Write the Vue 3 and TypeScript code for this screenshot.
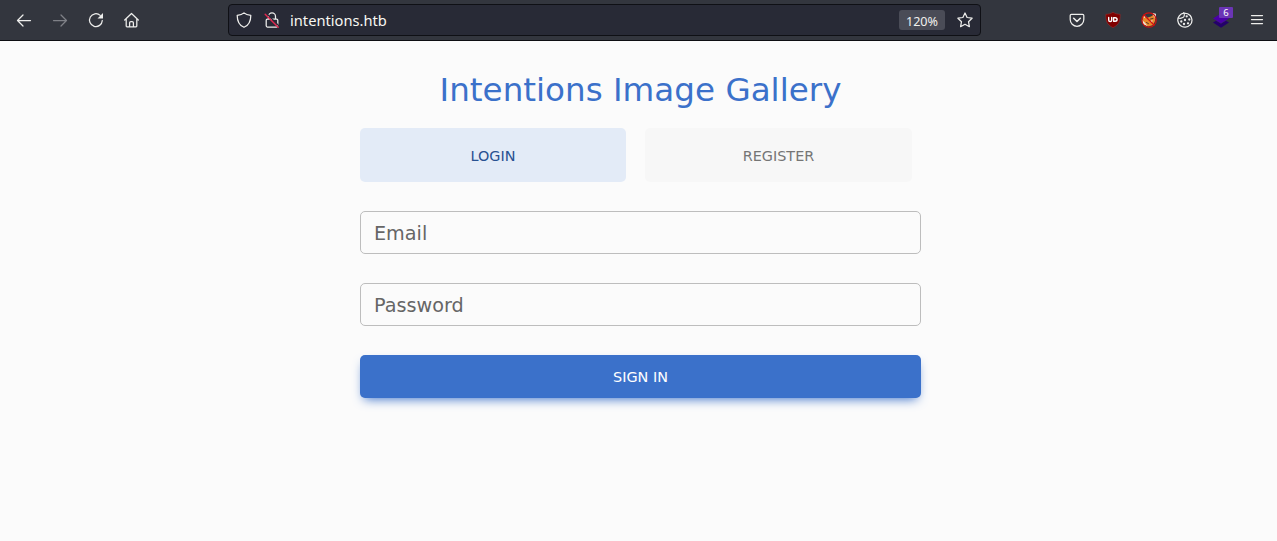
<script setup lang="ts">
import { ref } from 'vue';

type Tab = 'login' | 'register';

const tabs: { id: Tab; label: string }[] = [
  { id: 'login', label: 'Login' },
  { id: 'register', label: 'Register' },
];

const activeTab = ref<Tab>('login');
const email = ref('');
const password = ref('');
</script>

<template>
  <div class="browser">
    <header class="toolbar">
      <nav class="nav-buttons">
        <!-- Back -->
        <svg class="icon" viewBox="0 0 16 16">
          <path d="M14.500 8.500H1.500M7 3L1.500 8.500 7 14" />
        </svg>
        <!-- Forward -->
        <svg class="icon disabled" viewBox="0 0 16 16">
          <path d="M1.500 8.500h13M9 3l5.500 5.500L9 14" />
        </svg>
        <!-- Reload -->
        <svg class="icon" viewBox="0 0 16 16">
          <path d="M14.300 8.500A6.400 6.400 0 1 1 12.200 3.400" />
          <path class="solid" d="M15 1v5.500H9.500z" />
        </svg>
        <!-- Home -->
        <svg class="icon" viewBox="0 0 16 16">
          <path d="M.7 8l6.800-6.500L14.300 8M2.200 7v7q0 .8.800.800h9q.8 0 .8-.8V7M5.600 14.800v-4q0-1.300 1.300-1.300h1.200q1.300 0 1.300 1.300v4" />
        </svg>
      </nav>

      <div class="url-bar">
        <svg class="icon" viewBox="0 0 16 16">
          <path d="M8 .9C6.400 2.400 4 3.100 1.200 3.400 1.200 9 3.100 13.200 8 15.300c4.900-2.100 6.800-6.300 6.800-11.900C12 3.100 9.600 2.400 8 .9z" />
        </svg>
        <svg class="icon lock" viewBox="0 0 16 16">
          <path d="M4.500 7V4.400a3.500 3.500 0 0 1 7 0V7M3.400 7h9.200q1.200 0 1.200 1.200v5.600q0 1.200-1.200 1.200H3.400q-1.200 0-1.200-1.200V8.200Q2.200 7 3.400 7z" />
          <path class="slash-gap" d="M2.500 1.500l13 13" />
          <path class="slash" d="M1.200 2.200l13 13" />
        </svg>
        <span class="url">intentions.htb</span>
        <span class="zoom">120%</span>
        <svg class="icon star" viewBox="0 0 16 16">
          <path d="M8 1l2.100 4.500 5 .7-3.600 3.500.9 5L8 12.300l-4.400 2.400.9-5L.9 6.200l5-.7z" />
        </svg>
      </div>

      <div class="extensions">
        <!-- Pocket -->
        <svg class="icon" viewBox="0 0 16 16">
          <path d="M2.400 2.300h11.200q1.200 0 1.200 1.200v4a6.800 6.800 0 0 1-13.600 0v-4q0-1.200 1.200-1.200z" />
          <path class="bold" d="M4.700 6.300L8 9.500l3.300-3.200" />
        </svg>
        <!-- Ad blocker -->
        <svg class="icon" viewBox="0 0 16 16">
          <path class="shield" d="M8 .3c2 1.300 4.300 1.900 7.200 2 0 6.900-.8 10-7.200 13.400C1.600 12.300.8 9.200.8 2.300c2.900-.1 5.200-.7 7.200-2z" />
          <path class="shield-mark" d="M3.700 5.500v2.400q0 1.600 1.500 1.600t1.500-1.600V5.500" />
          <path class="shield-mark" d="M8.600 5.700H10q2.100 0 2.100 1.800T10 9.300H8.600z" />
        </svg>
        <!-- Proxy switcher -->
        <svg class="icon" viewBox="0 0 16 16">
          <path class="fox" d="M2 3.500l3 2.500 5-1.500L13.500 2l.7 6.500-2 4.500-5 1.500-4.500-2.200L1.500 9z" />
          <path class="fox-light" d="M1 8l3 2.700 2.500 3.300-4-1.500zM11.500 1l3.500.7-.2 5.300-2-2.500zM8.500 9.500l3-1.500-.5 3zM3 2.500L5.500 5 3 6z" />
          <path class="fox-dark" d="M5.500 10.500l2 1.200M9.500 7l2.500-.5" />
          <circle class="ban" cx="8" cy="8" r="7.200" />
          <path class="ban" d="M3 3l10 10" />
        </svg>
        <!-- Cookie editor -->
        <svg class="icon" viewBox="0 0 16 16">
          <path d="M6.800 1.100A7.100 7.100 0 1 0 15 8q-.2-2.500-1.800-4.500Q11 1 6.800 1.100z" />
          <path class="bite" d="M6.600.8q1 .4.700 2 .3 2-2.100 3-2 1-3.800.2" />
          <g class="crumbs">
            <circle cx="9.700" cy="4.300" r="1.150" />
            <circle cx="12.300" cy="7.500" r="1.150" />
            <circle cx="8" cy="8" r="1.150" />
            <circle cx="4.300" cy="9.500" r="1.150" />
            <circle cx="7" cy="12" r="1.150" />
            <circle cx="11" cy="11.300" r="1.150" />
          </g>
        </svg>
        <!-- Layers -->
        <div class="layers">
          <svg class="icon" viewBox="0 0 16 16">
            <path class="layer-bottom" d="M0 10.500l3-1.800 5 3 5-3 3 1.800-8 5.200z" />
            <path class="layer-top" d="M0 6.500l8-5 8 5-8 5z" />
          </svg>
          <span class="badge">6</span>
        </div>
        <!-- Menu -->
        <svg class="icon" viewBox="0 0 16 16">
          <path d="M2.500 3.500h11M2.500 7.500h11M2.500 11.500h11" />
        </svg>
      </div>
    </header>

    <main class="page">
      <h1>Intentions Image Gallery</h1>
      <div class="tabs">
        <button
          v-for="tab in tabs"
          :key="tab.id"
          type="button"
          class="tab"
          :class="{ active: activeTab === tab.id }"
          @click="activeTab = tab.id"
        >
          {{ tab.label }}
        </button>
      </div>
      <form @submit.prevent>
        <input v-model="email" class="field" type="email" placeholder="Email" />
        <input v-model="password" class="field" type="password" placeholder="Password" />
        <button class="submit" type="submit">Sign in</button>
      </form>
    </main>
  </div>
</template>

<style>
body {
  background: #fbfbfb;
}
</style>

<style scoped>
.browser {
  height: 100vh;
  overflow: hidden;
  font-family: 'DejaVu Sans', sans-serif;
  background: #fbfbfb;
}

.toolbar {
  box-sizing: border-box;
  display: flex;
  align-items: center;
  height: 41px;
  padding: 0 12px 0 16px;
  background: #33363e;
  border-bottom: 1px solid #0d0e12;
}

.nav-buttons,
.extensions {
  display: flex;
  align-items: center;
  gap: 20px;
}

.icon {
  display: block;
  flex: none;
  width: 16px;
  height: 16px;
  fill: none;
  stroke: #eeeeec;
  stroke-width: 1.25;
  stroke-linecap: round;
  stroke-linejoin: round;
}

.icon.disabled {
  stroke: #7f8187;
}

.solid,
.crumbs {
  fill: #eeeeec;
  stroke: none;
}

.bold {
  stroke-width: 1.6;
}

.bite {
  stroke-width: 1.1;
}

.url-bar {
  box-sizing: border-box;
  display: flex;
  align-items: center;
  width: 753px;
  height: 32px;
  margin-left: 88px;
  padding: 0 7px;
  background: #282a36;
  border: 1px solid #0f1015;
  border-radius: 4px;
}

.lock {
  margin-left: 12px;
}

.slash {
  stroke: #e22850;
  stroke-width: 1.4;
}

.slash-gap {
  stroke: #282a36;
}

.url {
  flex: 1;
  margin-left: 10px;
  font: 14.67px/20px 'Noto Sans', sans-serif;
  color: #f8f8f2;
}

.zoom {
  width: 46px;
  height: 20px;
  border-radius: 3px;
  background: #4a4c57;
  color: #f0f0ee;
  font: 12.6px/23px 'Noto Sans', sans-serif;
  text-align: center;
}

.star {
  margin-left: 12px;
}

.extensions {
  margin-left: auto;
}

.shield {
  fill: #800000;
  stroke: #8f3030;
  stroke-width: 0.6;
}

.shield-mark {
  stroke: #fff;
  stroke-width: 1.4;
}

.fox {
  fill: #e8892b;
  stroke: none;
}

.fox-light {
  fill: #f2e5d5;
  stroke: none;
}

.fox-dark {
  stroke: #54372b;
  stroke-width: 1;
}

.ban {
  stroke: #d01010;
  stroke-width: 1.2;
}

.layers {
  position: relative;
}

.layer-top {
  fill: #4b00a8;
  stroke: none;
}

.layer-bottom {
  fill: #24006b;
  stroke: none;
}

.badge {
  position: absolute;
  top: -5px;
  left: 6px;
  width: 14px;
  height: 11px;
  border-radius: 1px;
  background: #6b35b5;
  color: #fff;
  font: 9.5px/11px 'Noto Sans', sans-serif;
  text-align: center;
}

.page {
  width: 561px;
  margin-left: 360px;
  padding-top: 29px;
}

h1 {
  margin: 0 0 18px;
  font-size: 32.6px;
  font-weight: 400;
  line-height: 40px;
  text-align: center;
  white-space: nowrap;
  color: #3b71ca;
}

.tabs {
  display: grid;
  grid-template-columns: 266px 267px;
  gap: 19px;
  margin-bottom: 29px;
}

button {
  padding: 0;
  border: none;
  border-radius: 5px;
  font-family: inherit;
  font-size: 14.4px;
  text-transform: uppercase;
  cursor: pointer;
}

.tab {
  height: 54px;
  padding-top: 2px;
  background: #f7f7f7;
  color: #757575;
}

.tab.active {
  background: #e3ebf7;
  color: #285192;
}

form {
  display: flex;
  flex-direction: column;
  gap: 29px;
}

.field {
  box-sizing: border-box;
  width: 100%;
  height: 43px;
  padding: 2px 13px 0;
  border: 1px solid #bdbdbd;
  border-radius: 5px;
  outline: none;
  background: transparent;
  font-family: inherit;
  font-size: 19.2px;
  color: #4f4f4f;
}

.field::placeholder {
  color: #666;
  opacity: 1;
}

.submit {
  height: 43px;
  padding-top: 1px;
  background: #3b71ca;
  color: #fff;
  box-shadow: 0 5px 11px -4px #3b71ca;
}
</style>
